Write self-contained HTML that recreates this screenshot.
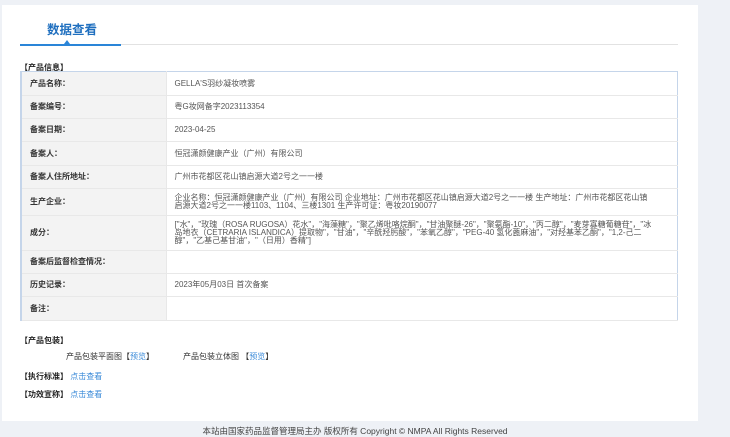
<!DOCTYPE html>
<html><head><meta charset="utf-8"><style>
*{margin:0;padding:0;box-sizing:border-box}
body{width:730px;height:435px;background:#eef1f6;font-family:"Liberation Sans","Noto Sans CJK SC",sans-serif;font-size:8px;color:#333;position:relative;overflow:hidden}
.panel{position:absolute;left:2px;top:5px;width:696px;height:416px;background:#fff}
.title{position:absolute;left:45px;top:14px;font-size:12.5px;font-weight:bold;color:#1f6fbf}
.gline{position:absolute;left:20px;top:44px;width:658px;height:1px;background:#e2e2e2}
.bline{position:absolute;left:20px;top:44px;width:101px;height:1.5px;background:#2a85d8}
.tri{position:absolute;left:64px;top:40px;width:0;height:0;border-left:3px solid transparent;border-right:3px solid transparent;border-bottom:4px solid #2a85d8}
.h{position:absolute;left:20px;font-weight:bold;color:#222}
table{position:absolute;left:20px;top:71px;width:658px;border-collapse:collapse;border:1px solid #c5d5ea;border-left:2px solid #c5d5ea}
td{border-bottom:1px solid #e8e8e8;vertical-align:middle;line-height:8px}
td.l{width:145px;background:#f3f3f3;font-weight:bold;padding-left:8px;color:#333;border-right:1px solid #e8e8e8}
td.v{padding-left:8px;padding-right:22px;color:#555}
a{color:#3a8ad8;text-decoration:none}
.foot{position:absolute;top:425px;left:0;width:710px;text-align:center;color:#444;font-size:8.5px}
</style></head><body>
<div class="panel">
<div class="title">数据查看</div>
</div>
<div class="gline"></div><div class="bline"></div><div class="tri"></div>
<div class="h" style="top:62px">【产品信息】</div>
<table>
<tr style="height:24px"><td class="l">产品名称：</td><td class="v">GELLA'S羽纱凝妆喷雾</td></tr>
<tr style="height:23px"><td class="l">备案编号：</td><td class="v">粤G妆网备字2023113354</td></tr>
<tr style="height:23px"><td class="l">备案日期：</td><td class="v">2023-04-25</td></tr>
<tr style="height:24px"><td class="l">备案人：</td><td class="v">恒冠潇颜健康产业（广州）有限公司</td></tr>
<tr style="height:23px"><td class="l">备案人住所地址：</td><td class="v">广州市花都区花山镇启源大道2号之一一楼</td></tr>
<tr style="height:27px"><td class="l">生产企业：</td><td class="v">企业名称：恒冠潇颜健康产业（广州）有限公司 企业地址：广州市花都区花山镇启源大道2号之一一楼 生产地址：广州市花都区花山镇启源大道2号之一一楼1103、1104、三楼1301 生产许可证：粤妆20190077</td></tr>
<tr style="height:35px"><td class="l">成分：</td><td class="v">["水"，"玫瑰（ROSA RUGOSA）花水"，"海藻糖"，"聚乙烯吡咯烷酮"，"甘油聚醚-26"，"聚氨酯-10"，"丙二醇"，"麦芽寡糖葡糖苷"，"冰岛地衣（CETRARIA ISLANDICA）提取物"，"甘油"，"辛酰羟肟酸"，"苯氧乙醇"，"PEG-40 氢化蓖麻油"，"对羟基苯乙酮"，"1,2-己二醇"，"乙基己基甘油"，"（日用）香精"]</td></tr>
<tr style="height:23px"><td class="l">备案后监督检查情况：</td><td class="v"></td></tr>
<tr style="height:23px"><td class="l">历史记录：</td><td class="v">2023年05月03日 首次备案</td></tr>
<tr style="height:24px"><td class="l">备注：</td><td class="v"></td></tr>
</table>
<div class="h" style="top:335px">【产品包装】</div>
<div style="position:absolute;top:351px;left:66px">产品包装平面图【<a>预览</a>】</div>
<div style="position:absolute;top:351px;left:183px">产品包装立体图 【<a>预览</a>】</div>
<div class="h" style="top:371px">【执行标准】 <a style="font-weight:normal">点击查看</a></div>
<div class="h" style="top:389px">【功效宣称】 <a style="font-weight:normal">点击查看</a></div>
<div class="foot">本站由国家药品监督管理局主办 版权所有 Copyright © NMPA All Rights Reserved</div>
</body></html>
